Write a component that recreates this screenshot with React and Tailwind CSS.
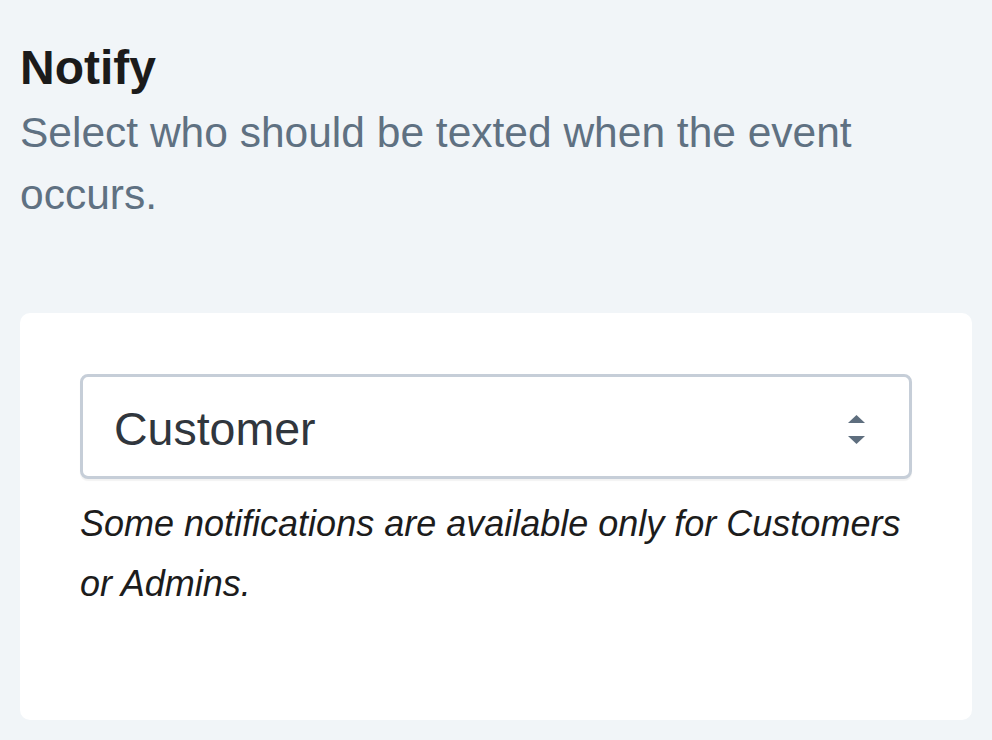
import React from "react";

export default function App() {
  return (
    <div
      className="min-h-[740px] w-full bg-[#f1f5f8] px-[20px] pt-[40px] pb-[20px]"
      style={{ fontFamily: '"Liberation Sans", Arial, Helvetica, sans-serif' }}
    >
      <h1 className="text-[48px] leading-[56px] font-bold text-[#1b1b1b] mb-[6px]">Notify</h1>
      <p className="text-[42.5px] leading-[62px] text-[#5f7182] pr-[110px]">
        Select who should be texted when the event occurs.
      </p>
      <div className="mt-[87px] h-[407px] rounded-[10px] bg-white px-[60px] pt-[61px]">
        <div className="flex h-[105px] items-center justify-between rounded-[8px] border-[3px] border-[#c6ced8] bg-white pl-[31px] pr-[44px] pt-[6px] shadow-[0_2px_1px_rgba(0,0,0,0.05)]">
          <span className="text-[46.5px] text-[#30363d]">Customer</span>
          <svg width="17" height="29" viewBox="0 0 17 29" className="block">
            <polygon points="8.5,0 17,8 0,8" fill="#5e6e7e" />
            <polygon points="0,21 17,21 8.5,29" fill="#5e6e7e" />
          </svg>
        </div>
        <p className="mt-[15px] text-[36px] leading-[60px] italic text-[#1c1c1c]">
          Some notifications are available only for Customers or Admins.
        </p>
      </div>
    </div>
  );
}
